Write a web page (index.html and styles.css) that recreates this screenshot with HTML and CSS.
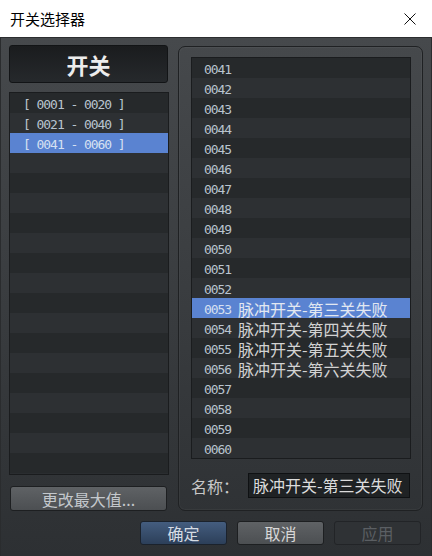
FILE: index.html
```html
<!DOCTYPE html>
<html lang="zh-CN">
<head>
    <meta charset="UTF-8">
    <meta name="viewport" content="width=device-width, initial-scale=1.0">
    <title>开关选择器</title>
    <link rel="stylesheet" href="styles.css">
</head>
<body>
  <div class="titlebar">
    <span class="title">开关选择器</span>
    <svg class="close" viewBox="0 0 12 12"><path d="M0.5 0.5L11.5 11.5M11.5 0.5L0.5 11.5" /></svg>
  </div>
  <div class="content">
    <div class="main">
      <div class="side">
        <div class="side-head">开关</div>
        <ul class="list groups">
          <li>[ 0001 - 0020 ]</li>
          <li>[ 0021 - 0040 ]</li>
          <li class="active">[ 0041 - 0060 ]</li>
          <li></li><li></li><li></li><li></li><li></li><li></li><li></li><li></li>
          <li></li><li></li><li></li><li></li><li></li><li></li><li></li><li></li>
        </ul>
        <button class="btn btn-side">更改最大值...</button>
      </div>
      <div class="panel">
        <ul class="list items">
          <li><span class="num">0041</span></li>
          <li><span class="num">0042</span></li>
          <li><span class="num">0043</span></li>
          <li><span class="num">0044</span></li>
          <li><span class="num">0045</span></li>
          <li><span class="num">0046</span></li>
          <li><span class="num">0047</span></li>
          <li><span class="num">0048</span></li>
          <li><span class="num">0049</span></li>
          <li><span class="num">0050</span></li>
          <li><span class="num">0051</span></li>
          <li><span class="num">0052</span></li>
          <li class="active"><span class="num">0053</span><span class="cjk">脉冲开关-第三关失败</span></li>
          <li><span class="num">0054</span><span class="cjk">脉冲开关-第四关失败</span></li>
          <li><span class="num">0055</span><span class="cjk">脉冲开关-第五关失败</span></li>
          <li><span class="num">0056</span><span class="cjk">脉冲开关-第六关失败</span></li>
          <li><span class="num">0057</span></li>
          <li><span class="num">0058</span></li>
          <li><span class="num">0059</span></li>
          <li><span class="num">0060</span></li>
        </ul>
        <div class="name-row">
          <label class="name-label">名称：</label>
          <div class="name-input">脉冲开关-第三关失败</div>
        </div>
      </div>
    </div>
    <div class="footer">
      <button class="btn btn-ok">确定</button>
      <button class="btn">取消</button>
      <button class="btn btn-off">应用</button>
    </div>
  </div>
</body>
</html>
```

FILE: styles.css
```css
* {
  margin: 0;
  padding: 0;
  box-sizing: border-box;
}
body {
  width: 432px;
  height: 556px;
  overflow: hidden;
  font-family: "Noto Sans CJK SC", sans-serif;
  background-color: #2e3134;
}
.titlebar {
  height: 38px;
  background-color: #fff;
  border-bottom: 1px solid #2b2d2f;
  display: flex;
  align-items: center;
  justify-content: space-between;
  padding: 0 16px 0 10px;
}
.title {
  font-size: 15px;
  color: #000;
}
.close {
  width: 12px;
  height: 12px;
  fill: none;
  stroke: #111;
  stroke-width: 1;
}
.content {
  height: 518px;
  background: linear-gradient(#46494c, #2d3033);
  padding: 7px 9px 0;
  box-shadow: inset 1px 0 #2a2c2e, inset -1px 0 #2a2c2e;
}
.main {
  display: flex;
  gap: 9px;
  height: 466px;
}
.side {
  width: 160px;
  display: flex;
  flex-direction: column;
}
.side-head {
  height: 38px;
  margin-right: 1px;
  background: linear-gradient(#1a1c1e, #26292c);
  border: 1px solid #121416;
  border-radius: 3px;
  color: #ececec;
  font-size: 22px;
  font-weight: bold;
  display: flex;
  align-items: center;
  justify-content: center;
}
.list {
  list-style: none;
  border: 1px solid #1a1c1e;
  background-color: #2a2d30;
  font-family: "DejaVu Sans Mono", monospace;
  font-size: 13px;
  letter-spacing: -1.05px;
  color: #b9c4cf;
  overflow: hidden;
}
.list li {
  height: 20px;
  padding-top: 2px;
  display: flex;
  align-items: center;
  white-space: pre;
}
.list li:nth-child(odd) {
  background-color: #26292b;
}
.list li:nth-child(even) {
  background-color: #2d3033;
}
.list li.active {
  background-color: #5a83d1;
  color: #d6e0f2;
}
.groups {
  margin-top: 9px;
  height: 383px;
}
.groups li {
  padding-left: 13px;
}
.items {
  height: 402px;
}
.items li {
  padding-left: 12px;
}
.num {
  width: 34px;
}
.cjk {
  font-family: "Noto Sans CJK SC", sans-serif;
  font-size: 16px;
  line-height: 18px;
  letter-spacing: 0;
  color: #d2d2d2;
}
.active .cjk {
  color: #e2e8f2;
}
.btn {
  height: 24px;
  border: 1px solid #1d1f21;
  border-radius: 3px;
  background: linear-gradient(#5f6265, #4c4f52);
  color: #d8d8d8;
  font-family: "Noto Sans CJK SC", sans-serif;
  font-size: 16px;
  line-height: 22px;
}
.btn-side {
  margin: 11px 2px 0 1px;
  height: 25px;
  color: #c4c8cc;
}
.panel {
  width: 245px;
  height: 465px;
  margin-top: 1px;
  border: 1px solid #1f2123;
  border-radius: 7px;
  padding: 10px 11px 12px 12px;
  display: flex;
  flex-direction: column;
  box-shadow: inset 0 0 0 1px rgba(255, 255, 255, 0.04);
}
.name-row {
  margin-top: 14px;
  display: flex;
  align-items: center;
}
.name-label {
  width: 57px;
  font-size: 16px;
  color: #c8c8c8;
}
.name-input {
  width: 162px;
  height: 25px;
  background-color: #1f2224;
  border: 1px solid #0f1113;
  padding-left: 4px;
  font-size: 16px;
  line-height: 23px;
  color: #dcdcdc;
  white-space: nowrap;
  overflow: hidden;
}
.footer {
  display: flex;
  justify-content: flex-end;
  gap: 10px;
  padding: 10px 2px 0 0;
}
.footer .btn {
  width: 87px;
}
.btn-ok {
  background: linear-gradient(#445d7f, #2c3f59);
  border-color: #1b222c;
  color: #d6dce4;
}
.btn-off {
  background: #2f3235;
  border-color: #222427;
  color: #5b5f63;
}
```
